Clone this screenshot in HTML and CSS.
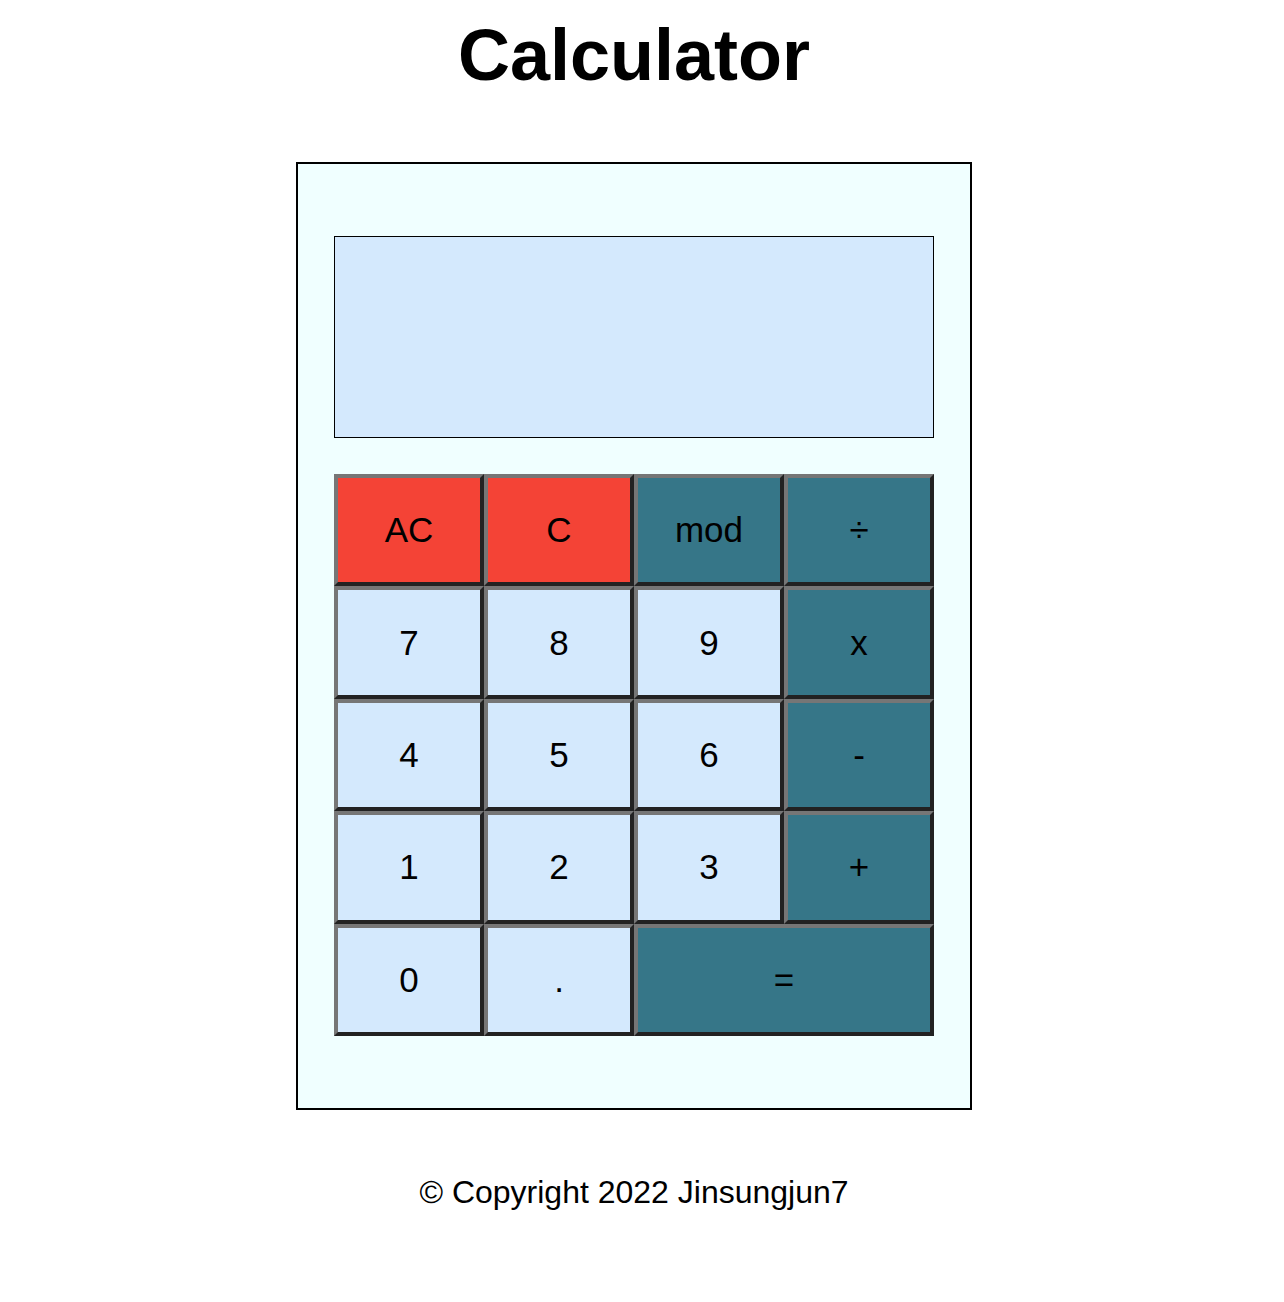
FILE: index.html
```html
<!DOCTYPE html>
<html lang="en">
<head>
<meta charset="utf-8">
<title>Calculator</title>
<link rel="stylesheet" href="styles.css">
</head>
<body>
  <h1 class="title">Calculator</h1>
  <div class="calculator">
    <div class="display"></div>
    <div class="keys">
      <button class="key key-clear">AC</button>
      <button class="key key-clear">C</button>
      <button class="key key-op">mod</button>
      <button class="key key-op">÷</button>
      <button class="key key-num">7</button>
      <button class="key key-num">8</button>
      <button class="key key-num">9</button>
      <button class="key key-op">x</button>
      <button class="key key-num">4</button>
      <button class="key key-num">5</button>
      <button class="key key-num">6</button>
      <button class="key key-op">-</button>
      <button class="key key-num">1</button>
      <button class="key key-num">2</button>
      <button class="key key-num">3</button>
      <button class="key key-op">+</button>
      <button class="key key-num">0</button>
      <button class="key key-num">.</button>
      <button class="key key-op key-wide">=</button>
    </div>
  </div>
  <p class="footer">© Copyright 2022 Jinsungjun7</p>
</body>
</html>
```
FILE: styles.css
```css
html, body {
  background: #ffffff;
}
body {
  margin: 0;
  padding: 0 16px 0 0;
  font-family: "Liberation Sans", Arial, sans-serif;
  color: #000;
  display: flex;
  flex-direction: column;
  align-items: center;
}
.title {
  font-size: 72px;
  font-weight: bold;
  margin: 14px 0 66px;
  line-height: normal;
}
.calculator {
  width: 600px;
  padding: 72px 36px;
  background: #f0ffff;
  border: 2px solid #000;
  display: flex;
  flex-direction: column;
  gap: 36px;
}
.display {
  height: 200px;
  background: #d4e9fd;
  border: 1px solid #000;
}
.keys {
  display: grid;
  grid-template-columns: repeat(4, 150px);
  grid-auto-rows: 112.4px;
}
.key {
  margin: 0;
  padding: 0;
  font-family: "Liberation Sans", Arial, sans-serif;
  font-size: 35px;
  color: #000;
  border-width: 4px;
  border-style: solid;
  border-color: #767676 #222222 #222222 #767676;
  cursor: pointer;
}
.key-clear {
  background: #f44336;
}
.key-op {
  background: #367688;
}
.key-num {
  background: #d4e9fd;
}
.key-wide {
  grid-column: span 2;
}
.footer {
  font-size: 32px;
  margin: 64px 0 0;
  line-height: normal;
}
```
